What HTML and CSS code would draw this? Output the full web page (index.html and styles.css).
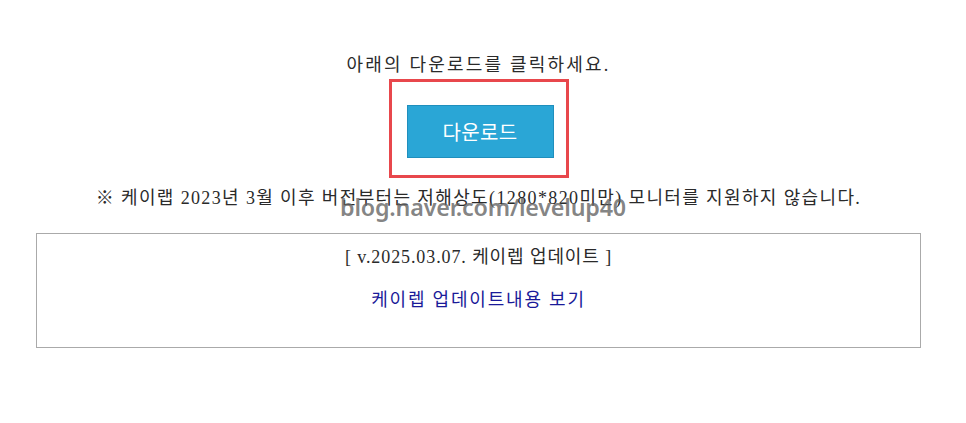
FILE: index.html
```html
<!DOCTYPE html>
<html lang="ko">
<head>
<meta charset="utf-8">
<title>다운로드</title>
<link rel="stylesheet" href="styles.css">
</head>
<body>
<div class="page">
  <p class="title">아래의 다운로드를 클릭하세요.</p>
  <div class="highlight">
    <a class="btn" href="#">다운로드</a>
  </div>
  <p class="notice">※ 케이랩 2023년 3월 이후 버전부터는 저해상도(1280*820미만) 모니터를 지원하지 않습니다.</p>
  <div class="update">
    <p class="version">[ v.2025.03.07. 케이렙 업데이트 ]</p>
    <a class="link" href="#">케이렙 업데이트내용 보기</a>
  </div>
  <div class="watermark">blog.naver.com/levelup40</div>
</div>
</body>
</html>
```
FILE: styles.css
```css
html, body {
  margin: 0;
  padding: 0;
  background: #ffffff;
}
.page {
  position: relative;
  width: 957px;
  display: flex;
  flex-direction: column;
  align-items: center;
  padding-top: 53px;
  font-family: "Liberation Serif", "Noto Sans CJK KR", serif;
  color: #2a2a2a;
}
.title {
  margin: 0;
  font-size: 18px;
  line-height: 24px;
  letter-spacing: 2.2px;
}
.highlight {
  margin-top: 2px;
  border: 3px solid #e8474c;
  padding: 23px 12px 17px 15px;
}
.btn {
  display: flex;
  align-items: center;
  justify-content: center;
  width: 147px;
  height: 53px;
  background: #2aa6d6;
  border: 1px solid #1f8fbd;
  box-sizing: border-box;
  color: #ffffff;
  text-decoration: none;
  font-family: "Noto Sans CJK KR", sans-serif;
  font-size: 20px;
  letter-spacing: 0.3px;
}
.notice {
  margin: 8px 0 0 0;
  font-size: 18px;
  line-height: 24px;
  letter-spacing: 1.37px;
}
.update {
  align-self: flex-start;
  margin-left: 36px;
  margin-top: 23px;
  width: 885px;
  height: 115px;
  box-sizing: border-box;
  border: 1px solid #aaaaaa;
  display: flex;
  flex-direction: column;
  align-items: center;
  padding-top: 11px;
}
.version {
  margin: 0;
  font-size: 18px;
  line-height: 24px;
  letter-spacing: 0.9px;
}
.link {
  margin-top: 19px;
  font-size: 18px;
  line-height: 24px;
  color: #1a1a99;
  text-decoration: none;
  letter-spacing: 1.8px;
}
.watermark {
  position: absolute;
  left: 340px;
  top: 191px;
  font-family: "Noto Sans", sans-serif;
  font-weight: 600;
  font-size: 23.3px;
  line-height: 32px;
  color: rgba(100, 100, 100, 0.8);
  letter-spacing: -0.2px;
}
```
